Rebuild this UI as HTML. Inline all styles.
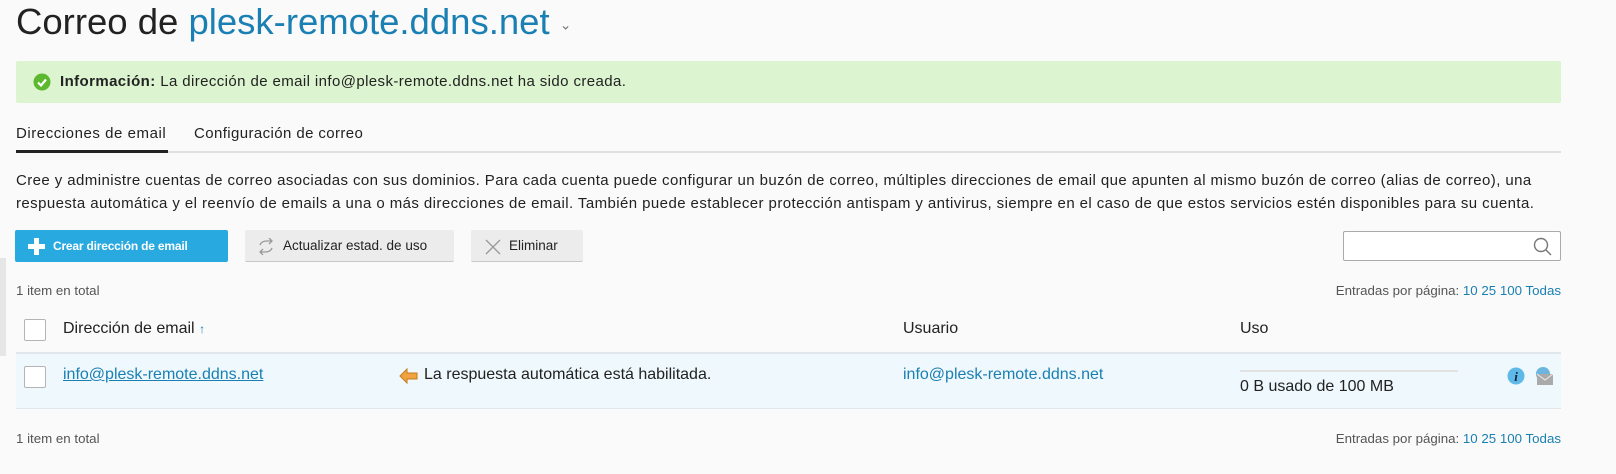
<!DOCTYPE html>
<html><head><meta charset="utf-8"><style>
*{margin:0;padding:0;box-sizing:border-box}
body{width:1616px;height:474px;background:#fafafa;font-family:"Liberation Sans",sans-serif;color:#222;position:relative;overflow:hidden;font-size:14px}
.a{position:absolute;white-space:nowrap}
.link{color:#1a7fb3}
.btn{position:absolute;top:230px;height:32px;border-radius:2px;font-size:13.5px;line-height:32px}
.gray{background:#ececec;border-bottom:1px solid #c8c8c8;color:#222}
.cb{position:absolute;width:22px;height:22px;border:1px solid #b4b4b4;background:#fff;border-radius:2px}
.muted{color:#555;font-size:13.3px}
.t16{font-size:16px}
</style></head><body>
<div class="a" style="left:0;top:258px;width:6px;height:98px;background:#e6e6e6"></div>
<div class="a" style="left:16px;top:0;font-size:36.5px;line-height:44px;color:#222">Correo de <span class="link" style="color:#1a7fb3">plesk-remote.ddns.net</span> <span style="font-size:14px;color:#777;vertical-align:middle">&#8964;</span></div>
<div class="a" style="left:16px;top:61px;width:1545px;height:42px;background:#dcf5d0;border-radius:2px"></div>
<svg class="a" style="left:33px;top:73px" width="18" height="18"><circle cx="9" cy="9" r="8.5" fill="#5cb82e"/><path d="M5 9.5l3 3 5-6" stroke="#fff" stroke-width="2.2" fill="none"/></svg>
<div class="a" style="left:60px;top:72px;font-size:15px;letter-spacing:0.4px;line-height:20px"><b>Información:</b> La dirección de email info@plesk-remote.ddns.net ha sido creada.</div>
<div class="a" style="left:16px;top:125px;font-size:15px;letter-spacing:0.55px">Direcciones de email</div>
<div class="a" style="left:194px;top:125px;font-size:15px;letter-spacing:0.4px">Configuración de correo</div>
<div class="a" style="left:16px;top:151px;width:1545px;height:2px;background:#e0e0e0"></div>
<div class="a" style="left:16px;top:150px;width:152px;height:3px;background:#222"></div>
<div class="a" style="left:16px;top:169px;font-size:15px;letter-spacing:0.42px;line-height:23px;color:#222">Cree y administre cuentas de correo asociadas con sus dominios. Para cada cuenta puede configurar un buzón de correo, múltiples direcciones de email que apunten al mismo buzón de correo (alias de correo), una<br>respuesta automática y el reenvío de emails a una o más direcciones de email. También puede establecer protección antispam y antivirus, siempre en el caso de que estos servicios estén disponibles para su cuenta.</div>
<div class="btn" style="left:15px;width:213px;background:#28a9e0;color:#fff;font-weight:bold;font-size:12px;letter-spacing:-0.2px">
<svg class="a" style="left:13px;top:8px" width="17" height="17"><path d="M6 0h5v6h6v5h-6v6H6v-6H0V6h6z" fill="#fff"/></svg>
<span class="a" style="left:38px">Crear dirección de email</span></div>
<div class="btn gray" style="left:245px;width:209px">
<svg class="a" style="left:12px;top:8px" width="18" height="17" fill="none" stroke="#999" stroke-width="1.3"><path d="M3 7c1-3 4-4 7-4h5M12 0l3 3-3 3M15 10c-1 3-4 4-7 4H3M6 17l-3-3 3-3"/></svg>
<span class="a" style="left:38px">Actualizar estad. de uso</span></div>
<div class="btn gray" style="left:471px;width:112px">
<svg class="a" style="left:14px;top:9px" width="16" height="16" fill="none" stroke="#999" stroke-width="1.3"><path d="M1 1l14 14M15 1L1 15"/></svg>
<span class="a" style="left:38px">Eliminar</span></div>
<div class="a" style="left:1343px;top:231px;width:218px;height:30px;background:#fff;border:1px solid #aaa;border-radius:2px"></div>
<svg class="a" style="left:1533px;top:237px" width="20" height="20" fill="none" stroke="#777" stroke-width="1.4"><circle cx="8" cy="8" r="6.5"/><path d="M13 13l5 5"/></svg>
<div class="a muted" style="left:16px;top:283px">1 item en total</div>
<div class="a muted" style="right:55px;top:283px">Entradas por página: <span class="link">10 25 100 Todas</span></div>
<div class="cb" style="left:24px;top:319px"></div>
<div class="a t16" style="left:63px;top:320px">Dirección de email <span class="link" style="font-size:12px">&#8593;</span></div>
<div class="a t16" style="left:903px;top:320px">Usuario</div>
<div class="a t16" style="left:1240px;top:320px">Uso</div>
<div class="a" style="left:16px;top:352px;width:1545px;height:57px;background:#eef8fd;border-top:2px solid #e0e6ea;border-bottom:1px solid #e0e6ea"></div>
<div class="cb" style="left:24px;top:366px"></div>
<div class="a link t16" style="left:63px;top:366px;text-decoration:underline">info@plesk-remote.ddns.net</div>
<svg class="a" style="left:399px;top:368px" width="19" height="16"><path d="M1 8l7-7v4h10v6H8v4z" fill="#f0a340" stroke="#c77a1a" stroke-width="1"/></svg>
<div class="a t16" style="left:424px;top:366px">La respuesta automática está habilitada.</div>
<div class="a link t16" style="left:903px;top:366px">info@plesk-remote.ddns.net</div>
<div class="a" style="left:1240px;top:370px;width:218px;height:2px;background:#e2e2e2"></div>
<div class="a t16" style="left:1240px;top:378px">0 B usado de 100 MB</div>
<svg class="a" style="left:1507px;top:367px" width="18" height="18"><circle cx="9" cy="9" r="8.5" fill="#5fb9e8"/><text x="9" y="14" font-family="Liberation Serif" font-style="italic" font-weight="bold" font-size="13" fill="#123" text-anchor="middle">i</text></svg>
<svg class="a" style="left:1534px;top:366px" width="20" height="20"><circle cx="9" cy="8" r="7" fill="#6cb5e0"/><rect x="3" y="8" width="16" height="11" fill="#aaa"/><path d="M3 8l8 6 8-6" stroke="#eee" fill="none"/></svg>
<div class="a muted" style="left:16px;top:431px">1 item en total</div>
<div class="a muted" style="right:55px;top:431px">Entradas por página: <span class="link">10 25 100 Todas</span></div>
</body></html>
